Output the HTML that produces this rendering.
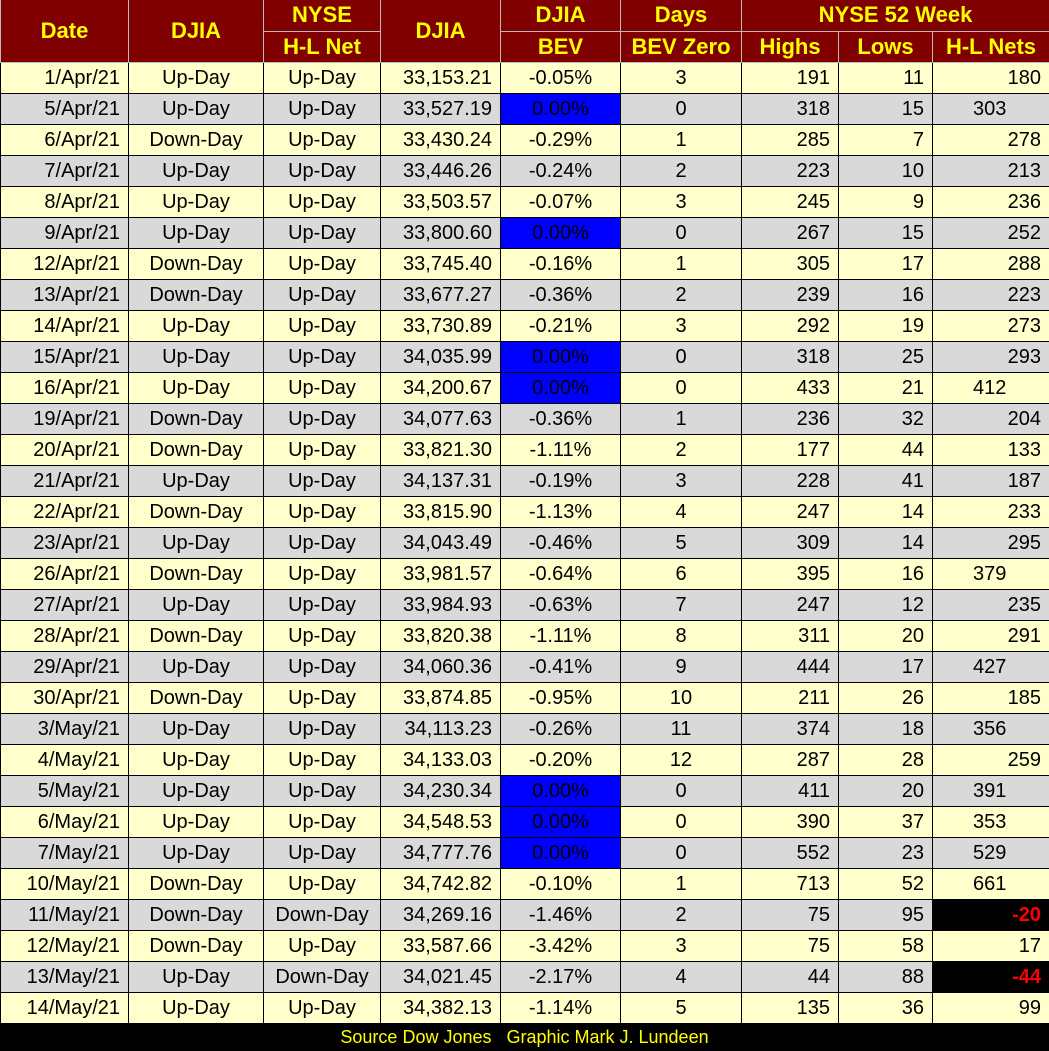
<!DOCTYPE html>
<html><head><meta charset="utf-8"><style>
body{margin:0;background:#000;width:1049px;height:1051px;overflow:hidden;font-family:"Liberation Sans",sans-serif;}
table{border-collapse:collapse;table-layout:fixed;width:1049px;position:absolute;left:0;top:0}
td{border:1px solid #000;height:30px;padding:0 8px;font-size:20px;color:#000;white-space:nowrap;overflow:hidden;line-height:30px}
tr.h td{background:#800000;color:#ff0;font-weight:bold;font-size:22px;text-align:center;border:1px solid #bbb;border-top:none;height:30.5px;padding:0}
tr.y td{background:#ffffcc}
tr.g td{background:#d9d9d9}
td.r{text-align:right}
td.c{text-align:center}
td.b{background:#0000ff!important;color:#000}
td.k{background:#000!important;color:#f00;font-weight:bold}
td.m{text-align:left;padding-left:40px}
.f{position:absolute;left:0;top:1024px;width:1049px;height:27px;color:#ff0;font-size:18px;line-height:27px;text-align:center;background:#000}
</style></head><body>
<table>
<colgroup><col style="width:128px"><col style="width:135px"><col style="width:117px"><col style="width:120px"><col style="width:120px"><col style="width:121px"><col style="width:97px"><col style="width:94px"><col style="width:117px"></colgroup>
<tr class="h"><td rowspan="2">Date</td><td rowspan="2">DJIA</td><td>NYSE</td><td rowspan="2">DJIA</td><td>DJIA</td><td>Days</td><td colspan="3">NYSE 52 Week</td></tr>
<tr class="h"><td>H-L Net</td><td>BEV</td><td>BEV Zero</td><td>Highs</td><td>Lows</td><td>H-L Nets</td></tr>
<tr class="y"><td class="r">1/Apr/21</td><td class="c">Up-Day</td><td class="c">Up-Day</td><td class="r">33,153.21</td><td class="c">-0.05%</td><td class="c">3</td><td class="r">191</td><td class="r">11</td><td class="r">180</td></tr>
<tr class="g"><td class="r">5/Apr/21</td><td class="c">Up-Day</td><td class="c">Up-Day</td><td class="r">33,527.19</td><td class="c b">0.00%</td><td class="c">0</td><td class="r">318</td><td class="r">15</td><td class="m">303</td></tr>
<tr class="y"><td class="r">6/Apr/21</td><td class="c">Down-Day</td><td class="c">Up-Day</td><td class="r">33,430.24</td><td class="c">-0.29%</td><td class="c">1</td><td class="r">285</td><td class="r">7</td><td class="r">278</td></tr>
<tr class="g"><td class="r">7/Apr/21</td><td class="c">Up-Day</td><td class="c">Up-Day</td><td class="r">33,446.26</td><td class="c">-0.24%</td><td class="c">2</td><td class="r">223</td><td class="r">10</td><td class="r">213</td></tr>
<tr class="y"><td class="r">8/Apr/21</td><td class="c">Up-Day</td><td class="c">Up-Day</td><td class="r">33,503.57</td><td class="c">-0.07%</td><td class="c">3</td><td class="r">245</td><td class="r">9</td><td class="r">236</td></tr>
<tr class="g"><td class="r">9/Apr/21</td><td class="c">Up-Day</td><td class="c">Up-Day</td><td class="r">33,800.60</td><td class="c b">0.00%</td><td class="c">0</td><td class="r">267</td><td class="r">15</td><td class="r">252</td></tr>
<tr class="y"><td class="r">12/Apr/21</td><td class="c">Down-Day</td><td class="c">Up-Day</td><td class="r">33,745.40</td><td class="c">-0.16%</td><td class="c">1</td><td class="r">305</td><td class="r">17</td><td class="r">288</td></tr>
<tr class="g"><td class="r">13/Apr/21</td><td class="c">Down-Day</td><td class="c">Up-Day</td><td class="r">33,677.27</td><td class="c">-0.36%</td><td class="c">2</td><td class="r">239</td><td class="r">16</td><td class="r">223</td></tr>
<tr class="y"><td class="r">14/Apr/21</td><td class="c">Up-Day</td><td class="c">Up-Day</td><td class="r">33,730.89</td><td class="c">-0.21%</td><td class="c">3</td><td class="r">292</td><td class="r">19</td><td class="r">273</td></tr>
<tr class="g"><td class="r">15/Apr/21</td><td class="c">Up-Day</td><td class="c">Up-Day</td><td class="r">34,035.99</td><td class="c b">0.00%</td><td class="c">0</td><td class="r">318</td><td class="r">25</td><td class="r">293</td></tr>
<tr class="y"><td class="r">16/Apr/21</td><td class="c">Up-Day</td><td class="c">Up-Day</td><td class="r">34,200.67</td><td class="c b">0.00%</td><td class="c">0</td><td class="r">433</td><td class="r">21</td><td class="m">412</td></tr>
<tr class="g"><td class="r">19/Apr/21</td><td class="c">Down-Day</td><td class="c">Up-Day</td><td class="r">34,077.63</td><td class="c">-0.36%</td><td class="c">1</td><td class="r">236</td><td class="r">32</td><td class="r">204</td></tr>
<tr class="y"><td class="r">20/Apr/21</td><td class="c">Down-Day</td><td class="c">Up-Day</td><td class="r">33,821.30</td><td class="c">-1.11%</td><td class="c">2</td><td class="r">177</td><td class="r">44</td><td class="r">133</td></tr>
<tr class="g"><td class="r">21/Apr/21</td><td class="c">Up-Day</td><td class="c">Up-Day</td><td class="r">34,137.31</td><td class="c">-0.19%</td><td class="c">3</td><td class="r">228</td><td class="r">41</td><td class="r">187</td></tr>
<tr class="y"><td class="r">22/Apr/21</td><td class="c">Down-Day</td><td class="c">Up-Day</td><td class="r">33,815.90</td><td class="c">-1.13%</td><td class="c">4</td><td class="r">247</td><td class="r">14</td><td class="r">233</td></tr>
<tr class="g"><td class="r">23/Apr/21</td><td class="c">Up-Day</td><td class="c">Up-Day</td><td class="r">34,043.49</td><td class="c">-0.46%</td><td class="c">5</td><td class="r">309</td><td class="r">14</td><td class="r">295</td></tr>
<tr class="y"><td class="r">26/Apr/21</td><td class="c">Down-Day</td><td class="c">Up-Day</td><td class="r">33,981.57</td><td class="c">-0.64%</td><td class="c">6</td><td class="r">395</td><td class="r">16</td><td class="m">379</td></tr>
<tr class="g"><td class="r">27/Apr/21</td><td class="c">Up-Day</td><td class="c">Up-Day</td><td class="r">33,984.93</td><td class="c">-0.63%</td><td class="c">7</td><td class="r">247</td><td class="r">12</td><td class="r">235</td></tr>
<tr class="y"><td class="r">28/Apr/21</td><td class="c">Down-Day</td><td class="c">Up-Day</td><td class="r">33,820.38</td><td class="c">-1.11%</td><td class="c">8</td><td class="r">311</td><td class="r">20</td><td class="r">291</td></tr>
<tr class="g"><td class="r">29/Apr/21</td><td class="c">Up-Day</td><td class="c">Up-Day</td><td class="r">34,060.36</td><td class="c">-0.41%</td><td class="c">9</td><td class="r">444</td><td class="r">17</td><td class="m">427</td></tr>
<tr class="y"><td class="r">30/Apr/21</td><td class="c">Down-Day</td><td class="c">Up-Day</td><td class="r">33,874.85</td><td class="c">-0.95%</td><td class="c">10</td><td class="r">211</td><td class="r">26</td><td class="r">185</td></tr>
<tr class="g"><td class="r">3/May/21</td><td class="c">Up-Day</td><td class="c">Up-Day</td><td class="r">34,113.23</td><td class="c">-0.26%</td><td class="c">11</td><td class="r">374</td><td class="r">18</td><td class="m">356</td></tr>
<tr class="y"><td class="r">4/May/21</td><td class="c">Up-Day</td><td class="c">Up-Day</td><td class="r">34,133.03</td><td class="c">-0.20%</td><td class="c">12</td><td class="r">287</td><td class="r">28</td><td class="r">259</td></tr>
<tr class="g"><td class="r">5/May/21</td><td class="c">Up-Day</td><td class="c">Up-Day</td><td class="r">34,230.34</td><td class="c b">0.00%</td><td class="c">0</td><td class="r">411</td><td class="r">20</td><td class="m">391</td></tr>
<tr class="y"><td class="r">6/May/21</td><td class="c">Up-Day</td><td class="c">Up-Day</td><td class="r">34,548.53</td><td class="c b">0.00%</td><td class="c">0</td><td class="r">390</td><td class="r">37</td><td class="m">353</td></tr>
<tr class="g"><td class="r">7/May/21</td><td class="c">Up-Day</td><td class="c">Up-Day</td><td class="r">34,777.76</td><td class="c b">0.00%</td><td class="c">0</td><td class="r">552</td><td class="r">23</td><td class="m">529</td></tr>
<tr class="y"><td class="r">10/May/21</td><td class="c">Down-Day</td><td class="c">Up-Day</td><td class="r">34,742.82</td><td class="c">-0.10%</td><td class="c">1</td><td class="r">713</td><td class="r">52</td><td class="m">661</td></tr>
<tr class="g"><td class="r">11/May/21</td><td class="c">Down-Day</td><td class="c">Down-Day</td><td class="r">34,269.16</td><td class="c">-1.46%</td><td class="c">2</td><td class="r">75</td><td class="r">95</td><td class="r k">-20</td></tr>
<tr class="y"><td class="r">12/May/21</td><td class="c">Down-Day</td><td class="c">Up-Day</td><td class="r">33,587.66</td><td class="c">-3.42%</td><td class="c">3</td><td class="r">75</td><td class="r">58</td><td class="r">17</td></tr>
<tr class="g"><td class="r">13/May/21</td><td class="c">Up-Day</td><td class="c">Down-Day</td><td class="r">34,021.45</td><td class="c">-2.17%</td><td class="c">4</td><td class="r">44</td><td class="r">88</td><td class="r k">-44</td></tr>
<tr class="y"><td class="r">14/May/21</td><td class="c">Up-Day</td><td class="c">Up-Day</td><td class="r">34,382.13</td><td class="c">-1.14%</td><td class="c">5</td><td class="r">135</td><td class="r">36</td><td class="r">99</td></tr>
</table>
<div class="f">Source Dow Jones&nbsp;&nbsp;&nbsp;Graphic Mark J. Lundeen</div>
</body></html>
